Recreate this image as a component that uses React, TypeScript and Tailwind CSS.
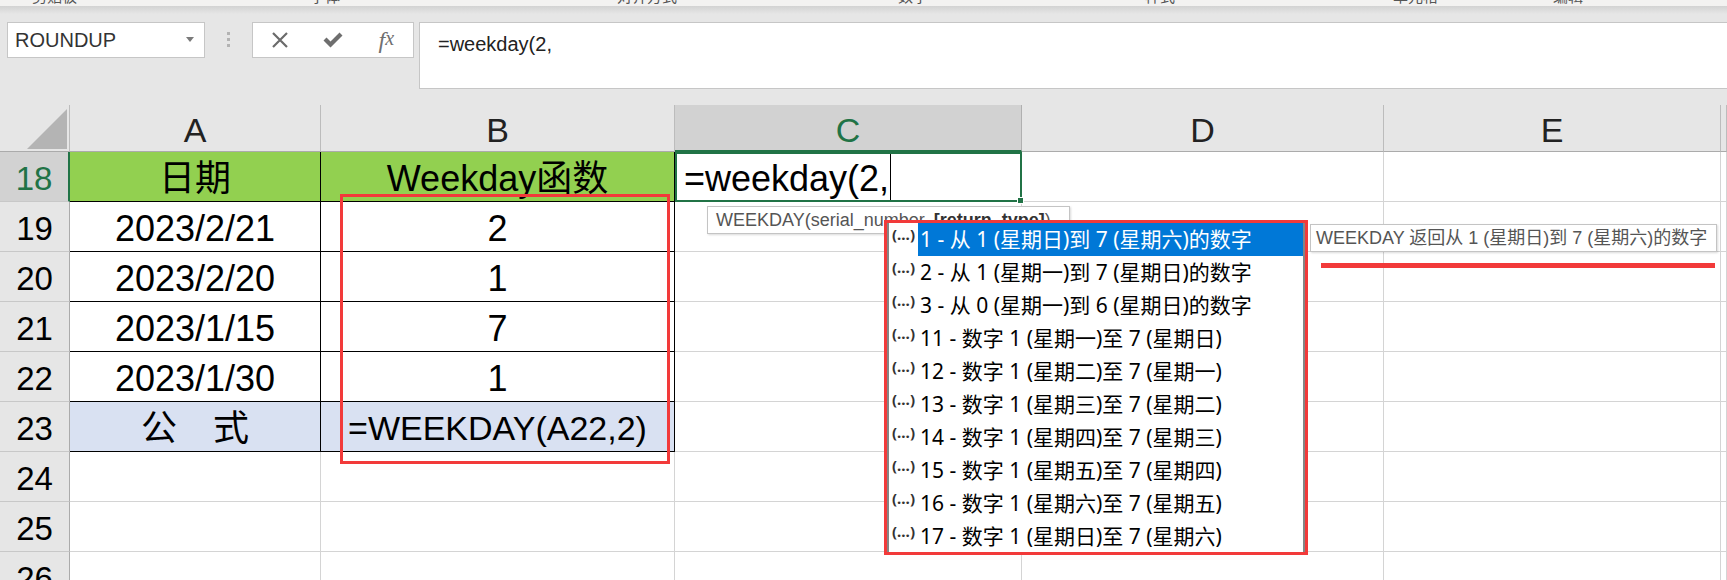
const cellFont = "font-['Liberation_Sans','Noto_Sans_CJK_SC',sans-serif]";
const uiFont = "font-['Noto_Sans','Noto_Sans_CJK_SC',sans-serif]";

const dataRows = [
  { n: 19, a: '2023/2/21', b: '2' },
  { n: 20, a: '2023/2/20', b: '1' },
  { n: 21, a: '2023/1/15', b: '7' },
  { n: 22, a: '2023/1/30', b: '1' },
];

const listItems = [
  '1 - 从 1 (星期日)到 7 (星期六)的数字',
  '2 - 从 1 (星期一)到 7 (星期日)的数字',
  '3 - 从 0 (星期一)到 6 (星期日)的数字',
  '11 - 数字 1 (星期一)至 7 (星期日)',
  '12 - 数字 1 (星期二)至 7 (星期一)',
  '13 - 数字 1 (星期三)至 7 (星期二)',
  '14 - 数字 1 (星期四)至 7 (星期三)',
  '15 - 数字 1 (星期五)至 7 (星期四)',
  '16 - 数字 1 (星期六)至 7 (星期五)',
  '17 - 数字 1 (星期日)至 7 (星期六)',
];

function RowHead({ n, active = false }: { n: number; active?: boolean }) {
  return (
    <div
      className={
        active
          ? 'flex items-center justify-center border-b border-b-[#c8c8c8] border-r-2 border-r-[#217346] bg-[#d2d2d2] pt-[4px] text-[33px] text-[#217346]'
          : 'flex items-center justify-center border-b border-r border-b-[#c8c8c8] border-r-[#ababab] bg-[#e6e6e6] pt-[4px] text-[33px] text-black'
      }
    >
      {n}
    </div>
  );
}

function TableCell({ children, bg = 'bg-white', size = 'text-[36px]' }: { children: React.ReactNode; bg?: string; size?: string }) {
  return (
    <div className={`flex items-center justify-center whitespace-nowrap border-r border-b border-black pt-[4px] ${bg} ${size} text-black`}>
      {children}
    </div>
  );
}

function EmptyCells({ count }: { count: number }) {
  return (
    <>
      {Array.from({ length: count }).map((_, i) => (
        <div key={i} className="border-r border-b border-[#d4d4d4] bg-white" />
      ))}
    </>
  );
}

export default function App() {
  return (
    <div className={`relative h-[580px] w-[1727px] overflow-hidden bg-[#e6e6e6] ${cellFont}`}>
      {/* ribbon bottom edge */}
      <div className="flex h-[6px] overflow-hidden bg-[#f3f2f1] text-[15px] leading-[16px] text-[#555]">
        <span className="-mt-[11px] ml-[32px] w-[60px] shrink-0">剪贴板</span>
        <span className="-mt-[11px] ml-[218px] w-[60px] shrink-0">字体</span>
        <span className="-mt-[11px] ml-[247px] w-[60px] shrink-0">对齐方式</span>
        <span className="-mt-[11px] ml-[221px] w-[60px] shrink-0">数字</span>
        <span className="-mt-[11px] ml-[187px] w-[60px] shrink-0">样式</span>
        <span className="-mt-[11px] ml-[188px] w-[60px] shrink-0">单元格</span>
        <span className="-mt-[11px] ml-[100px] w-[60px] shrink-0">编辑</span>
      </div>
      <div className="h-[8px] bg-gradient-to-b from-[#d2d2d2] to-[#e6e6e6]" />

      {/* name box + formula bar */}
      <div className="mb-[16px] mt-[8px] flex items-start">
        <div className="ml-[7px] flex h-[36px] w-[198px] items-center justify-between border border-[#c6c6c6] bg-white pl-[7px] pr-[10px] text-[20px] text-[#333]">
          <span>ROUNDUP</span>
          <svg width="8" height="5" viewBox="0 0 8 5" className="mb-[2px]">
            <polygon points="0,0 8,0 4,5" fill="#7a7a7a" />
          </svg>
        </div>
        <div className="ml-[21px] mt-[10px] flex w-[4px] flex-col items-center gap-[3px]">
          <span className="h-[3px] w-[3px] bg-[#b3b3b3]" />
          <span className="h-[3px] w-[3px] bg-[#b3b3b3]" />
          <span className="h-[3px] w-[3px] bg-[#b3b3b3]" />
        </div>
        <div className="ml-[22px] flex h-[36px] w-[162px] items-center border border-[#c6c6c6] bg-white">
          <div className="flex w-[54px] justify-center">
            <svg width="18" height="18" viewBox="0 0 18 18">
              <path d="M2 2 L16 16 M16 2 L2 16" stroke="#6b6b6b" strokeWidth="2.2" />
            </svg>
          </div>
          <div className="flex w-[54px] justify-center">
            <svg width="20" height="16" viewBox="0 0 20 16">
              <path d="M0.5 8.5 L3.5 5.5 L7.5 9.5 L16.5 0.5 L19.5 3.5 L7.5 15.5 Z" fill="#6e6e6e" />
            </svg>
          </div>
          <div className="flex w-[54px] justify-center font-['Liberation_Serif',serif] text-[24px] italic leading-none text-[#707070]">
            <span>f</span>
            <span className="text-[20px]">x</span>
          </div>
        </div>
        <div className="ml-[5px] h-[67px] flex-1 border border-r-0 border-[#c6c6c6] bg-white pl-[18px] pt-[6px] text-[20px] text-[#222]">
          =weekday(2,
        </div>
      </div>

      {/* sheet */}
      <div className="grid grid-cols-[70px_251px_354px_347px_362px_337px_6px] grid-rows-[47px_repeat(9,50px)]">
        {/* column headers */}
        <div className="border-r border-b border-r-[#bcbcbc] border-b-[#ababab]">
          <svg width="69" height="46" viewBox="0 0 69 46">
            <polygon points="27,44 67,4 67,44" fill="#b4b4b4" />
          </svg>
        </div>
        {['A', 'B'].map((c) => (
          <div key={c} className="flex items-center justify-center border-r border-b border-r-[#bcbcbc] border-b-[#ababab] pt-[5px] text-[34px] text-[#222]">
            {c}
          </div>
        ))}
        <div className="flex items-center justify-center border-r border-b-2 border-r-[#b0b0b0] border-b-[#217346] bg-[#d2d2d2] pt-[5px] text-[34px] text-[#217346]">
          C
        </div>
        {['D', 'E', ''].map((c, i) => (
          <div key={i} className="flex items-center justify-center border-r border-b border-r-[#bcbcbc] border-b-[#ababab] pt-[5px] text-[34px] text-[#222]">
            {c}
          </div>
        ))}

        {/* row 18 */}
        <RowHead n={18} active />
        <TableCell bg="bg-[#92d050]">日期</TableCell>
        <TableCell bg="bg-[#92d050]">Weekday函数</TableCell>
        <div className="relative flex items-center border-2 border-[#217346] bg-white pl-[7px] text-[36px] text-black">
          <span className="whitespace-nowrap pt-[3px]">=weekday(2,</span>
          <span className="ml-[1px] h-[46px] w-[1px] bg-black" />
          <span className="absolute -bottom-[4px] -right-[4px] z-10 h-[7px] w-[7px] border border-white bg-[#217346]" />
        </div>
        <EmptyCells count={3} />

        {dataRows.map((r) => (
          <div key={r.n} className="contents">
            <RowHead n={r.n} />
            <TableCell>{r.a}</TableCell>
            <TableCell>{r.b}</TableCell>
            <EmptyCells count={4} />
          </div>
        ))}

        {/* row 23 */}
        <RowHead n={23} />
        <TableCell bg="bg-[#d9e1f2]">公　式</TableCell>
        <TableCell bg="bg-[#d9e1f2]" size="text-[34px]">
          =WEEKDAY(A22,2)
        </TableCell>
        <EmptyCells count={4} />

        {[24, 25, 26].map((n) => (
          <div key={n} className="contents">
            <RowHead n={n} />
            <EmptyCells count={6} />
          </div>
        ))}
      </div>

      {/* red frame around column B results */}
      <div className="absolute left-[340px] top-[194px] h-[270px] w-[330px] border-[3px] border-[#f23a3a]" />

      {/* argument hint */}
      <div className="absolute left-[707px] top-[206px] flex h-[28px] items-center whitespace-nowrap border border-[#c4c4c4] bg-white pl-[8px] pr-[18px] text-[18px] text-[#555] shadow-[1px_1px_2px_rgba(0,0,0,0.15)]">
        WEEKDAY(serial_number, <b className="ml-[5px] text-[#333]">[return_type]</b>)
      </div>

      {/* autocomplete list */}
      <div className={`absolute left-[884px] top-[220px] h-[335px] w-[424px] border-[3px] border-[#f23a3a] bg-white ${uiFont}`}>
        <div className="h-full border-x-2 border-[#858585]">
          {listItems.map((t, i) => (
            <div key={t} className="flex h-[33px] items-stretch">
              <span className="w-[29px] shrink-0 pl-[3px] pt-[2px] text-[15px] font-bold leading-[18px] text-[#333]">(…)</span>
              <span
                className={
                  i === 0
                    ? 'flex flex-1 items-center whitespace-nowrap bg-[#0078d7] pl-[2px] text-[21px] text-white'
                    : 'flex flex-1 items-center whitespace-nowrap pl-[2px] text-[21px] text-black'
                }
              >
                {t}
              </span>
            </div>
          ))}
        </div>
      </div>

      {/* description tooltip */}
      <div className="absolute left-[1310px] top-[224px] flex h-[28px] w-[407px] items-center whitespace-nowrap border border-[#c4c4c4] bg-white pl-[5px] text-[18px] text-[#555] shadow-[1px_1px_2px_rgba(0,0,0,0.15)]">
        WEEKDAY 返回从 1 (星期日)到 7 (星期六)的数字
      </div>
      <div className="absolute left-[1321px] top-[263px] h-[5px] w-[394px] bg-[#f23a3a]" />
    </div>
  );
}
